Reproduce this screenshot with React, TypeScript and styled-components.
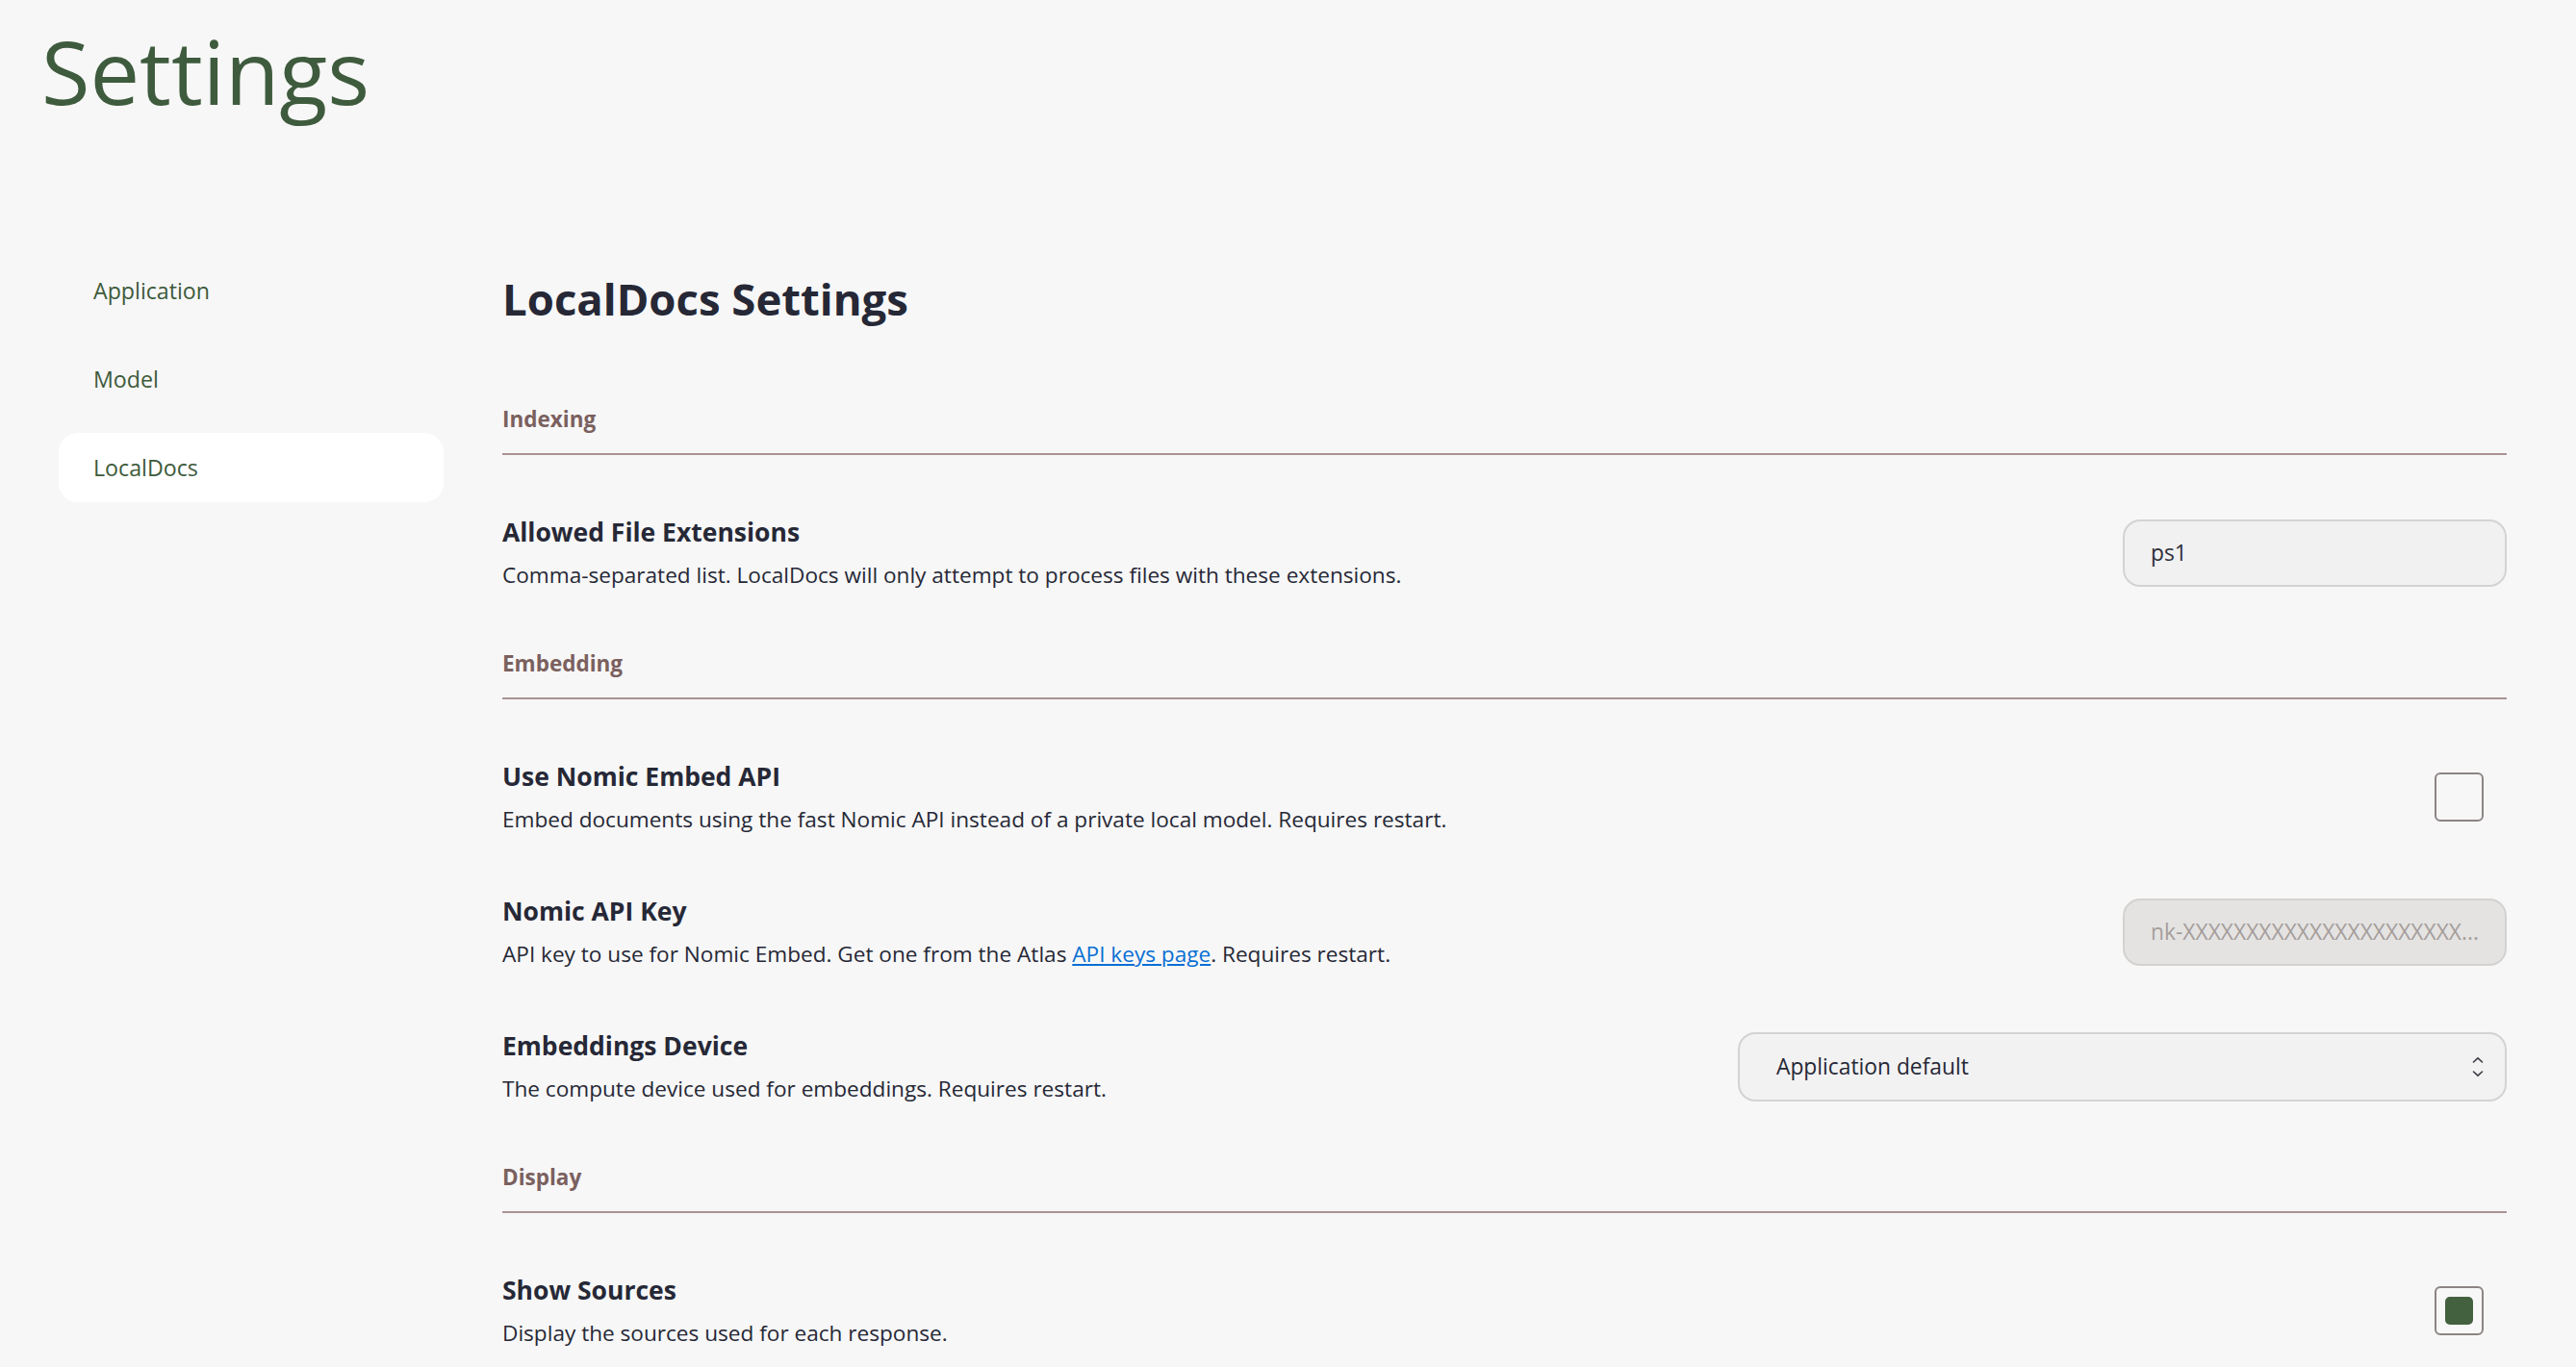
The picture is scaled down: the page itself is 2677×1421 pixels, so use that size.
import React from "react";
import styled, { createGlobalStyle } from "styled-components";

const Global = createGlobalStyle`
  html, body { margin: 0; padding: 0; background: #f7f7f7; }
  body { font-family: "Open Sans", "Noto Sans", sans-serif; color: #262836; }
  * { box-sizing: border-box; }
`;

const Page = styled.div`
  min-height: 1421px;
  background: #f7f7f7;
  display: flex;
  flex-direction: column;
`;

const Header = styled.header`
  padding: 19px 0 0 43px;
`;

const Title = styled.h1`
  margin: 0;
  font-size: 92px;
  line-height: 110px;
  font-weight: 400;
  color: #3e5b3d;
`;

const Body = styled.div`
  display: flex;
  padding: 137px 72px 0 61px;
  gap: 61px;
`;

const Sidebar = styled.nav`
  width: 400px;
  flex: none;
  display: flex;
  flex-direction: column;
  gap: 20px;
`;

const NavItem = styled.div<{ $active?: boolean }>`
  height: 72px;
  display: flex;
  align-items: center;
  padding-left: 36px;
  border-radius: 20px;
  background: ${(p) => (p.$active ? "#ffffff" : "transparent")};
  color: #3d5a3b;
  font-size: 23.2px;
`;

const Main = styled.main`
  flex: 1;
  padding-top: 14px;
`;

const Heading = styled.h2`
  margin: 0 0 81px;
  font-size: 45.5px;
  line-height: 60px;
  font-weight: 700;
  color: #262836;
`;

const Section = styled.section`
  & + & { margin-top: 62px; }
`;

const SectionLabel = styled.div`
  font-size: 22.5px;
  line-height: 30px;
  font-weight: 700;
  color: #7a605e;
  padding-bottom: 20px;
  border-bottom: 2px solid #a99493;
`;

const Row = styled.div`
  display: flex;
  align-items: center;
  justify-content: space-between;
  padding-top: 63px;
`;

const TextBlock = styled.div`
  display: flex;
  flex-direction: column;
  gap: 13px;
`;

const RowTitle = styled.div`
  font-size: 26.5px;
  line-height: 34px;
  font-weight: 700;
  color: #262836;
`;

const RowDesc = styled.div`
  font-size: 22.6px;
  line-height: 30px;
  color: #262836;
`;

const Link = styled.a`
  color: #0a6fd4;
  text-decoration: underline;
`;

const TextInput = styled.div<{ $disabled?: boolean }>`
  width: 399px;
  height: 70px;
  border-radius: 18px;
  border: 2px solid ${(p) => (p.$disabled ? "#d4d2d0" : "#d3d3d3")};
  background: ${(p) => (p.$disabled ? "#e4e3e2" : "#f1f1f1")};
  color: ${(p) => (p.$disabled ? "#a69e9b" : "#2e2e38")};
  font-size: 22.8px;
  display: flex;
  align-items: center;
  padding: 0 10px 0 27px;
  white-space: nowrap;
  overflow: hidden;
`;

const Select = styled.div`
  width: 799px;
  height: 72px;
  border-radius: 18px;
  border: 2px solid #d3d3d3;
  background: #f2f2f2;
  color: #262836;
  font-size: 22.8px;
  display: flex;
  align-items: center;
  justify-content: space-between;
  padding: 0 22px 0 38px;
`;

const Checkbox = styled.div<{ $checked?: boolean }>`
  width: 51px;
  height: 51px;
  margin-right: 24px;
  border: 2px solid #8b8583;
  border-radius: 6px;
  display: flex;
  align-items: center;
  justify-content: center;
  &::after {
    content: "";
    display: ${(p) => (p.$checked ? "block" : "none")};
    width: 29px;
    height: 29px;
    border-radius: 5px;
    background: #43603f;
  }
`;

const Chevrons = () => (
  <svg width="12" height="22" viewBox="0 0 12 22" fill="none" stroke="#3a3a44" strokeWidth="1.6" strokeLinecap="round" strokeLinejoin="round">
    <path d="M1.5 6 L6 1.8 L10.5 6" />
    <path d="M1.5 16 L6 20.2 L10.5 16" />
  </svg>
);

export default function App() {
  return (
    <Page>
      <Global />
      <Header>
        <Title>Settings</Title>
      </Header>
      <Body>
        <Sidebar>
          <NavItem>Application</NavItem>
          <NavItem>Model</NavItem>
          <NavItem $active>LocalDocs</NavItem>
        </Sidebar>
        <Main>
          <Heading>LocalDocs Settings</Heading>
          <Section>
            <SectionLabel>Indexing</SectionLabel>
            <Row>
              <TextBlock>
                <RowTitle>Allowed File Extensions</RowTitle>
                <RowDesc>Comma-separated list. LocalDocs will only attempt to process files with these extensions.</RowDesc>
              </TextBlock>
              <TextInput>ps1</TextInput>
            </Row>
          </Section>
          <Section>
            <SectionLabel>Embedding</SectionLabel>
            <Row>
              <TextBlock>
                <RowTitle>Use Nomic Embed API</RowTitle>
                <RowDesc>Embed documents using the fast Nomic API instead of a private local model. Requires restart.</RowDesc>
              </TextBlock>
              <Checkbox />
            </Row>
            <Row>
              <TextBlock>
                <RowTitle>Nomic API Key</RowTitle>
                <RowDesc>
                  API key to use for Nomic Embed. Get one from the Atlas <Link>API keys page</Link>. Requires restart.
                </RowDesc>
              </TextBlock>
              <TextInput $disabled>nk-XXXXXXXXXXXXXXXXXXXXXX...</TextInput>
            </Row>
            <Row>
              <TextBlock>
                <RowTitle>Embeddings Device</RowTitle>
                <RowDesc>The compute device used for embeddings. Requires restart.</RowDesc>
              </TextBlock>
              <Select>
                <span>Application default</span>
                <Chevrons />
              </Select>
            </Row>
          </Section>
          <Section>
            <SectionLabel>Display</SectionLabel>
            <Row>
              <TextBlock>
                <RowTitle>Show Sources</RowTitle>
                <RowDesc>Display the sources used for each response.</RowDesc>
              </TextBlock>
              <Checkbox $checked />
            </Row>
          </Section>
        </Main>
      </Body>
    </Page>
  );
}
